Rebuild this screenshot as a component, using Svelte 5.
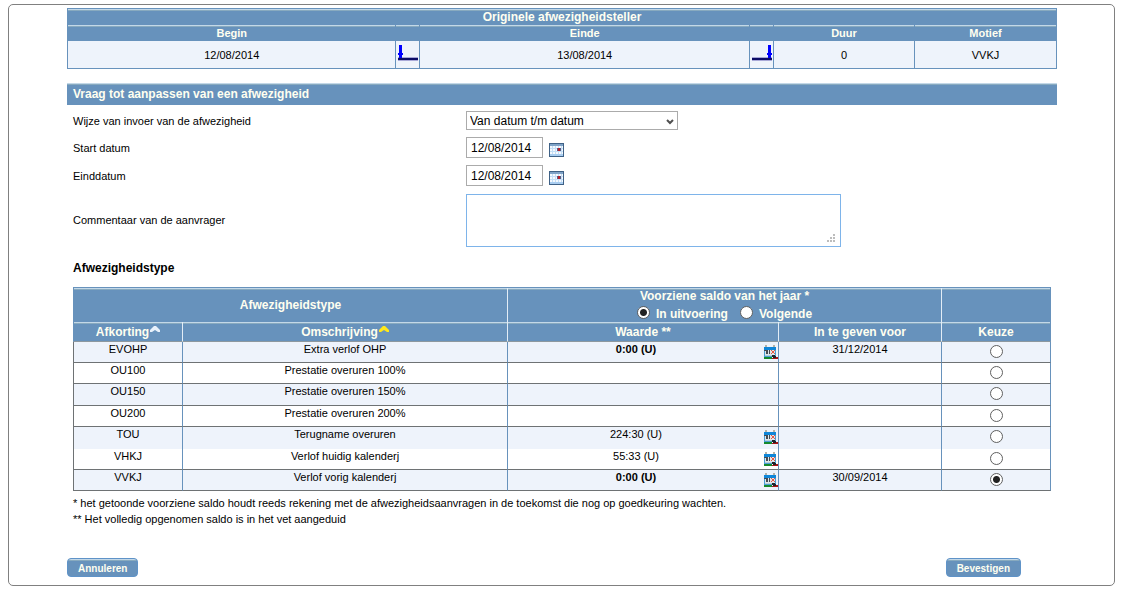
<script>
  let inputMode = 'datum';
  let startDate = '12/08/2014';
  let endDate = '12/08/2014';
  let comment = '';
  let year = 'current';
  let choice = 'VVKJ';

  const types = [
    { code: 'EVOHP', name: 'Extra verlof OHP', value: '0:00 (U)', used: true, before: '31/12/2014' },
    { code: 'OU100', name: 'Prestatie overuren 100%' },
    { code: 'OU150', name: 'Prestatie overuren 150%' },
    { code: 'OU200', name: 'Prestatie overuren 200%' },
    { code: 'TOU', name: 'Terugname overuren', value: '224:30 (U)', open: true },
    { code: 'VHKJ', name: 'Verlof huidig kalenderj', value: '55:33 (U)' },
    { code: 'VVKJ', name: 'Verlof vorig kalenderj', value: '0:00 (U)', used: true, before: '30/09/2014' },
  ];
</script>

{#snippet calendar()}
  <svg width="15" height="14" viewBox="0 0 15 14" shape-rendering="crispEdges" aria-hidden="true">
    <rect width="15" height="14" fill="#3f6186" />
    <rect x="1" y="1" width="13" height="2" fill="#7fa3c7" />
    <rect x="1" y="3" width="13" height="10" fill="#f4f9fe" />
    <path d="M3 3h1v10H3zM6 3h1v10H6zM9 3h1v10H9zM12 3h1v10h-1zM1 5h13v1H1zM1 8h13v1H1z" fill="#c4def6" />
    <rect x="1" y="11" width="13" height="2" fill="#a9cdf0" />
    <rect x="8" y="5" width="4" height="3" fill="#5f5a80" />
    <rect x="9" y="5" width="2" height="3" fill="#b3202c" />
  </svg>
{/snippet}

{#snippet sortArrow(color)}
  <svg class="sort" width="10" height="6" viewBox="0 0 10 6" aria-hidden="true">
    <path d="M4 0h2l4 4v2H8L5 4 2 6H0V4z" fill={color} />
  </svg>
{/snippet}

<div class="panel">
  <table class="original">
    <colgroup>
      <col /><col class="mark" /><col /><col class="mark" /><col class="duration" /><col class="reason" />
    </colgroup>
    <thead>
      <tr class="title"><th colspan="6">Originele afwezigheidsteller</th></tr>
      <tr><th>Begin</th><th></th><th>Einde</th><th></th><th>Duur</th><th>Motief</th></tr>
    </thead>
    <tbody>
      <tr>
        <td>12/08/2014</td>
        <td class="mark">
          <svg width="21" height="16" viewBox="0 0 21 16" shape-rendering="crispEdges" aria-hidden="true">
            <path d="M1 12h20v1H1zM1 15h20v1H1z" fill="#a9a9d8" />
            <path d="M1 13h20v2H1z" fill="#0c0c66" />
            <path d="M2 0h3v8h1v2H5v3H2v-3H1V8h1z" fill="#0000ff" />
          </svg>
        </td>
        <td>13/08/2014</td>
        <td class="mark">
          <svg width="21" height="16" viewBox="0 0 21 16" shape-rendering="crispEdges" aria-hidden="true">
            <path d="M1 12h20v1H1zM1 15h20v1H1z" fill="#a9a9d8" />
            <path d="M1 13h20v2H1z" fill="#0c0c66" />
            <path d="M17 0h3v8h1v2h-1v3h-3v-3h-1V8h1z" fill="#0000ff" />
          </svg>
        </td>
        <td>0</td>
        <td>VVKJ</td>
      </tr>
    </tbody>
  </table>

  <h2 class="bar">Vraag tot aanpassen van een afwezigheid</h2>

  <div class="request">
    <div class="fields">
      <label for="mode">Wijze van invoer van de afwezigheid</label>
      <div class="select">
        <select id="mode" bind:value={inputMode}>
          <option value="datum">Van datum t/m datum</option>
        </select>
        <svg width="8" height="6" viewBox="0 0 8 6" aria-hidden="true">
          <path d="M1 1l3 3 3-3" fill="none" stroke="#505050" stroke-width="2" />
        </svg>
      </div>

      <label for="start">Start datum</label>
      <div class="date">
        <input id="start" type="text" bind:value={startDate} />
        <button type="button" class="icon" aria-label="Kalender start datum">{@render calendar()}</button>
      </div>

      <label for="end">Einddatum</label>
      <div class="date">
        <input id="end" type="text" bind:value={endDate} />
        <button type="button" class="icon" aria-label="Kalender einddatum">{@render calendar()}</button>
      </div>

      <label for="comment">Commentaar van de aanvrager</label>
      <div class="comment">
        <textarea id="comment" bind:value={comment}></textarea>
        <svg width="8" height="8" viewBox="0 0 8 8" shape-rendering="crispEdges" aria-hidden="true">
          <path d="M6 0h2v2H6zM3 3h2v2H3zM6 3h2v2H6zM0 6h2v2H0zM3 6h2v2H3zM6 6h2v2H6z" fill="#bdbdbd" />
        </svg>
      </div>
    </div>

    <h3>Afwezigheidstype</h3>

    <table class="types">
      <colgroup>
        <col class="code" /><col /><col class="value" /><col class="before" /><col class="choice" />
      </colgroup>
      <thead>
        <tr class="groups">
          <th colspan="2">Afwezigheidstype</th>
          <th colspan="2">
            Voorziene saldo van het jaar *
            <div class="years">
              <label><input type="radio" name="year" value="current" bind:group={year} />In uitvoering</label>
              <label><input type="radio" name="year" value="next" bind:group={year} />Volgende</label>
            </div>
          </th>
          <th></th>
        </tr>
        <tr class="columns">
          <th>Afkorting{@render sortArrow('#e8f1fb')}</th>
          <th>Omschrijving{@render sortArrow('#ffe81a')}</th>
          <th>Waarde **</th>
          <th>In te geven voor</th>
          <th>Keuze</th>
        </tr>
      </thead>
      <tbody>
        {#each types as type}
          <tr class:open={type.open}>
            <td>{type.code}</td>
            <td>{type.name}</td>
            <td>
              {#if type.value}
                <div class="saldo">
                  <span class:used={type.used}>{type.value}</span>
                  <button type="button" class="icon" aria-label="Detail {type.code}">
                    <svg width="14" height="14" viewBox="0 0 14 14" shape-rendering="crispEdges" aria-hidden="true">
                      <path d="M0 2h12v10H0z" fill="#4a9fd4" />
                      <path d="M1 0h2v2H1zM9 0h2v2H9z" fill="#b5b2a6" />
                      <path d="M0 2h12v3H0z" fill="#0f86d8" />
                      <path d="M1 5h10v5H1z" fill="#dfe6ea" />
                      <path d="M0 5h4v1H0zM2 6h2v3H2zM5 5h1v4H5z" fill="#454b52" />
                      <path d="M7 5h1v1H7zM10 5h1v1h-1zM8 6h2v2H8zM7 8h1v1H7zM10 8h1v1h-1z" fill="#e8553f" />
                      <path d="M1 10h7v1H1z" fill="#b9cfdd" />
                      <path d="M0 12h8v2H0z" fill="#15892d" />
                      <path d="M8 10h3v1h1v1h1v1H9v-1H8z" fill="#20242b" />
                      <path d="M8 13h6v1H8zM12 12h2v1h-2z" fill="#a81616" />
                    </svg>
                  </button>
                </div>
              {/if}
            </td>
            <td>{type.before ?? ''}</td>
            <td class="choice">
              <input type="radio" name="choice" value={type.code} bind:group={choice} aria-label={type.name} />
            </td>
          </tr>
        {/each}
      </tbody>
    </table>

    <p class="note">* het getoonde voorziene saldo houdt reeds rekening met de afwezigheidsaanvragen in de toekomst die nog op goedkeuring wachten.</p>
    <p class="note">** Het volledig opgenomen saldo is in het vet aangeduid</p>
  </div>

  <div class="actions">
    <button type="button" class="btn">Annuleren</button>
    <button type="button" class="btn">Bevestigen</button>
  </div>
</div>

<style>
  :global(body) {
    margin: 0;
    background: #fff;
  }

  .panel {
    margin: 4px 6px 4px 8px;
    padding: 3px 57px 8px 58px;
    border: 1px solid #808080;
    border-radius: 5px;
    font-family: "Liberation Sans", Arial, sans-serif;
    font-size: 11px;
    line-height: 14px;
    color: #000;
  }

  table {
    width: 100%;
    table-layout: fixed;
    border-collapse: separate;
    border-spacing: 0;
    border-top: 1px solid #6792bc;
  }

  th,
  td {
    box-sizing: border-box;
    padding: 0;
    text-align: center;
    font-size: 11px;
    border-right: 1px solid #6792bc;
  }

  th:first-child,
  td:first-child {
    border-left: 1px solid #6792bc;
  }

  th,
  .bar {
    background: #6792bc linear-gradient(#c3d8e8 0 1px, #88aabf 1px 2px, transparent 2px) no-repeat;
    color: #fffff0;
    font-weight: bold;
  }

  .title th,
  .types th,
  .bar,
  h3 {
    font-size: 12px;
  }

  .original th {
    height: 16px;
    line-height: 16px;
  }

  .original col.mark {
    width: 24px;
  }

  .original col.duration {
    width: 141px;
  }

  .original col.reason {
    width: 142px;
  }

  .original td {
    height: 28px;
    background: #eef3fb;
    border-bottom: 1px solid #6792bc;
  }

  .original td.mark svg {
    display: block;
    margin: 0 auto 3px;
  }

  .bar {
    margin: 14px 0 0;
    padding: 0 6px;
    line-height: 22px;
  }

  .request {
    padding: 6px 6px 0;
  }

  .fields {
    display: grid;
    grid-template-columns: 393px 1fr;
    row-gap: 7px;
    align-items: center;
  }

  select,
  input[type="text"],
  textarea {
    box-sizing: border-box;
    display: block;
    margin: 0;
    background: #fff;
    border: 1px solid #ababab;
    border-radius: 0;
    color: #000;
    font-family: inherit;
    font-size: 12px;
    outline: none;
  }

  .select {
    position: relative;
    width: 212px;
  }

  .select select {
    appearance: none;
    width: 100%;
    height: 19px;
    padding: 0 3px;
  }

  .select svg {
    position: absolute;
    right: 4px;
    top: 8px;
    pointer-events: none;
  }

  .date {
    display: flex;
    align-items: flex-end;
    gap: 6px;
  }

  .date input {
    width: 77px;
    height: 21px;
    padding: 1px 4px;
  }

  .icon {
    display: block;
    padding: 0;
    border: none;
    background: none;
    cursor: pointer;
  }

  .date .icon {
    padding-bottom: 1px;
  }

  .icon svg {
    display: block;
  }

  .comment {
    position: relative;
    width: 375px;
    margin-top: 1px;
  }

  .comment textarea {
    width: 100%;
    height: 53px;
    border-color: #7eb4ea;
    resize: none;
  }

  .comment svg {
    position: absolute;
    right: 6px;
    bottom: 5px;
  }

  h3 {
    margin: 14px 0 12px;
    line-height: 14px;
  }

  .types col.code {
    width: 110px;
  }

  .types col.choice {
    width: 109px;
  }

  .types col.value {
    width: 271px;
  }

  .types col.before {
    width: 163px;
  }

  .types th {
    border-right-color: #e3edf6;
  }

  .types th:last-child {
    border-right-color: #6792bc;
  }

  .groups th {
    height: 34px;
  }

  .columns th {
    height: 20px;
    border-bottom: 1px solid #8d989f;
  }

  input[type="radio"] {
    appearance: none;
    box-sizing: border-box;
    width: 13px;
    height: 13px;
    margin: 0;
    border: 1px solid #606060;
    border-radius: 50%;
    background: #fff;
  }

  input[type="radio"]:checked {
    background: radial-gradient(circle, #222 3px, #fff 4px);
  }

  .years {
    display: flex;
    justify-content: center;
    gap: 12px;
    height: 18px;
  }

  .years label {
    display: flex;
    gap: 6px;
    line-height: 22px;
  }

  .years label input {
    margin-top: 3px;
  }

  .sort {
    margin-left: 1px;
    vertical-align: 4px;
  }

  .types td {
    height: 21px;
    vertical-align: top;
    border-bottom: 1px solid #6e7274;
  }

  .types td:first-child {
    border-left-color: #6e7274;
  }

  .types tbody tr:nth-child(3) td,
  .types tbody tr:nth-child(5) td {
    height: 22px;
  }

  .types tbody tr:nth-child(odd) {
    background: #eef3fb;
  }

  .types .open td {
    border-bottom: none;
  }

  .types td.choice {
    padding-top: 3px;
  }

  .types .choice input {
    display: block;
    margin: 0 auto;
  }

  .saldo {
    display: flex;
    height: 17px;
  }

  .saldo span {
    flex: 1;
  }

  .saldo .icon {
    align-self: flex-end;
  }

  .used {
    font-weight: bold;
  }

  .note {
    margin: 0;
    line-height: 16px;
  }

  .types + .note {
    margin-top: 4px;
  }

  .actions {
    display: flex;
    justify-content: space-between;
    margin-top: 31px;
    padding-right: 36px;
  }

  .btn {
    height: 19px;
    padding: 1px 10px 0;
    border: 1px solid #5f93c8;
    border-radius: 4px;
    background: #6792bc linear-gradient(#c3d8e8 0 1px, #88aabf 1px 2px, transparent 2px) no-repeat;
    color: #fffff0;
    font-family: inherit;
    font-size: 10px;
    font-weight: bold;
    cursor: pointer;
  }
</style>
